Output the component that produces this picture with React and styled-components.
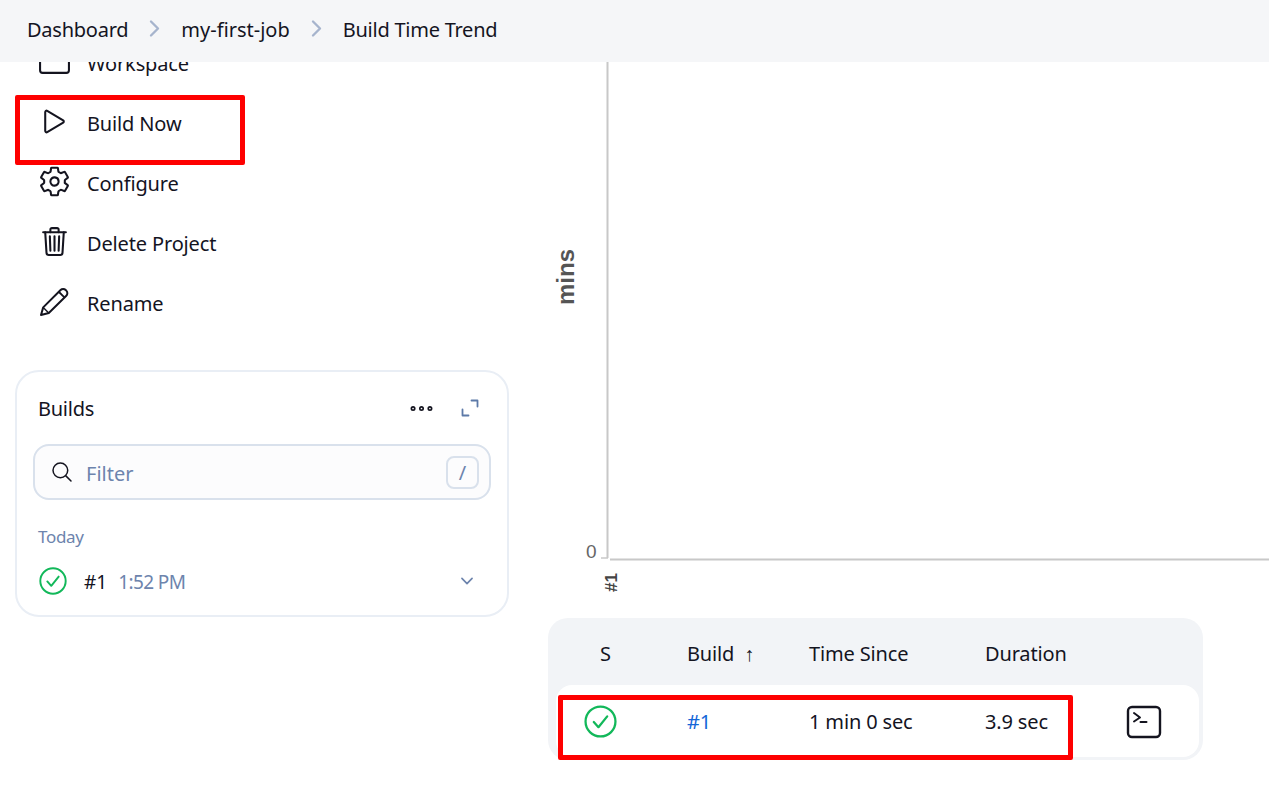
import styled, { createGlobalStyle } from "styled-components";
import {
  IoPlayOutline,
  IoSettingsOutline,
  IoTrashOutline,
  IoFolderOutline,
  IoSearchOutline,
  IoEllipsisHorizontalOutline,
  IoChevronDown,
  IoChevronForward,
} from "react-icons/io5";

const GlobalStyle = createGlobalStyle`
  html, body {
    margin: 0;
    padding: 0;
    background: #fff;
    overflow: hidden;
  }
  body {
    font-family: "Noto Sans", "Open Sans", sans-serif;
    color: #14141f;
  }
`;

const Page = styled.div`
  width: 1269px;
  height: 792px;
  overflow: hidden;
  position: relative;
`;

const Breadcrumbs = styled.nav`
  position: relative;
  z-index: 2;
  height: 62px;
  background: #f5f6f8;
  display: flex;
  align-items: center;
  padding: 0 0 4px 27px;
  box-sizing: border-box;
  font-size: 20px;
`;

const Crumb = styled.span`
  white-space: nowrap;
  letter-spacing: ${(p) => p.$tracking ?? -0.25}px;
`;

const CrumbArrow = styled.span`
  display: flex;
  width: 53px;
  justify-content: center;
  color: #a6b4cd;
  font-size: 25px;
  margin-bottom: 1px;
`;

const Columns = styled.div`
  display: flex;
`;

const Sidebar = styled.aside`
  width: 548px;
  flex: none;
  padding-left: 15px;
  box-sizing: border-box;
`;

const Nav = styled.div`
  margin-top: -28px;
  margin-bottom: 36px;
`;

const NavRow = styled.div`
  position: relative;
  height: 60px;
  box-sizing: border-box;
  padding-bottom: 2px;
  display: flex;
  align-items: center;
  font-size: 20px;
  letter-spacing: -0.15px;
`;

const NavIcon = styled.span`
  width: 72px;
  padding-left: 23px;
  margin-bottom: 3px;
  box-sizing: border-box;
  flex: none;
  display: flex;
  font-size: 33px;
`;

const Highlight = styled.div`
  position: absolute;
  border: 5px solid #fe0000;
  border-radius: 2px;
  box-sizing: border-box;
  left: ${(p) => p.$left}px;
  top: ${(p) => p.$top}px;
  width: ${(p) => p.$width}px;
  height: ${(p) => p.$height}px;
`;

const BuildsCard = styled.section`
  width: 494px;
  height: 247px;
  box-sizing: border-box;
  border: 2px solid #e9eef5;
  border-radius: 24px;
  padding: 0 16px;
`;

const CardHeader = styled.div`
  height: 72px;
  display: flex;
  align-items: center;
  padding: 0 12px 0 5px;
  font-size: 20px;
  letter-spacing: -0.25px;
`;

const CardTitle = styled.span`
  flex: 1;
`;

const HeaderButton = styled.span`
  display: flex;
  margin-left: ${(p) => p.$gap}px;
  font-size: 27px;
`;

const FilterBox = styled.div`
  height: 56px;
  box-sizing: border-box;
  border: 2px solid #d9e1ec;
  border-radius: 16px;
  background: #fcfcfd;
  display: flex;
  align-items: center;
  padding: 0 10px 0 15px;
  gap: 12px;
  color: #6d84ad;
  font-size: 20px;
`;

const FilterIcon = styled.span`
  display: flex;
  color: #14141f;
  font-size: 24px;
`;

const FilterText = styled.span`
  flex: 1;
  padding-top: 3px;
`;

const KeyHint = styled.kbd`
  width: 33px;
  height: 33px;
  box-sizing: border-box;
  border: 2px solid #d9e1ec;
  border-radius: 8px;
  display: flex;
  align-items: center;
  justify-content: center;
  font-family: inherit;
  font-size: 20px;
`;

const DayLabel = styled.div`
  margin: 25px 0 0 5px;
  color: #6d84ad;
  font-size: 17px;
  letter-spacing: -0.3px;
`;

const BuildRow = styled.div`
  display: flex;
  align-items: center;
  margin: 18px 0 0 6px;
  height: 30px;
  font-size: 19px;
`;

const BuildNumber = styled.span`
  margin-left: 17px;
  padding-top: 1px;
`;

const BuildTime = styled.span`
  margin-left: 11px;
  padding-top: 1px;
  flex: 1;
  color: #6d84ad;
  letter-spacing: -0.6px;
`;

const RowChevron = styled.span`
  display: flex;
  color: #6d84ad;
  font-size: 18px;
  margin: 0 15px 1px 0;
`;

const Main = styled.main`
  flex: 1;
  min-width: 0;
`;

const ChartFrame = styled.div`
  height: 556px;
`;

const TableCard = styled.div`
  width: 655px;
  height: 142px;
  box-sizing: border-box;
  background: #f2f4f7;
  border-radius: 20px;
  padding: 0 4px 3px 8px;
  display: flex;
  flex-direction: column;
  font-size: 20px;
  letter-spacing: -0.15px;
`;

const TableRow = styled.div`
  position: relative;
  display: grid;
  grid-template-columns: 131px 122px 176px 1fr 78px;
  align-items: center;
  height: ${(p) => p.$height}px;
  box-sizing: border-box;
  padding-top: ${(p) => (p.$body ? "1px" : "4px")};
  background: ${(p) => (p.$body ? "#fff" : "transparent")};
  border-radius: ${(p) => (p.$body ? "16px" : "0")};
`;

const Cell = styled.span`
  white-space: nowrap;
  padding-left: ${(p) => p.$indent || 0}px;
  display: flex;
  align-items: center;
`;

const BuildLink = styled.a`
  color: #1466d8;
  text-decoration: none;
`;

function StatusIcon({ size, width }) {
  return (
    <svg width={size} height={size} viewBox="0 0 32 32" fill="none">
      <circle cx="16" cy="16" r="14.5" stroke="#12b85a" strokeWidth={width} />
      <path
        d="M9.5 16.5l4.5 5 8.5-10.5"
        stroke="#12b85a"
        strokeWidth={width}
        strokeLinecap="round"
        strokeLinejoin="round"
      />
    </svg>
  );
}

function PencilIcon() {
  return (
    <svg width="33" height="33" viewBox="0 0 33 33" fill="none">
      <path
        d="M3 30l2.2-7.6L22.6 5a3.6 3.6 0 0 1 5.1 0l.6.6a3.6 3.6 0 0 1 0 5.1L10.8 28z"
        stroke="#14141f"
        strokeWidth="2"
        strokeLinejoin="round"
      />
      <path d="M21 7l5.4 5.4" stroke="#14141f" strokeWidth="1.8" />
      <path d="M5.2 22.4l5.6 5.6" stroke="#14141f" strokeWidth="1.4" />
    </svg>
  );
}

function ExpandIcon() {
  return (
    <svg width="18" height="18" viewBox="0 0 18 18" fill="none">
      <path
        d="M10.5 1.5h6v6M1.5 10.5v6h6"
        stroke="#5d7aa8"
        strokeWidth="1.8"
        strokeLinecap="round"
        strokeLinejoin="round"
      />
    </svg>
  );
}

function ConsoleIcon() {
  return (
    <svg width="36" height="34" viewBox="0 0 36 34" fill="none">
      <rect x="2" y="2" width="32" height="30" rx="4" stroke="#14141f" strokeWidth="2.4" />
      <path
        d="M8 8l6 4.5-6 4M14.5 17h6"
        stroke="#14141f"
        strokeWidth="2"
        strokeLinecap="round"
        strokeLinejoin="round"
      />
    </svg>
  );
}

function TrendChart() {
  return (
    <svg width="721" height="556" viewBox="0 0 721 556">
      <line x1="59.5" y1="0" x2="59.5" y2="496" stroke="#c8c8c8" strokeWidth="2" />
      <line x1="53" y1="496" x2="60" y2="496" stroke="#c8c8c8" strokeWidth="1.5" />
      <line x1="62" y1="497.5" x2="721" y2="497.5" stroke="#c8c8c8" strokeWidth="2" />
      <text
        transform="translate(26 243) rotate(-90)"
        fontFamily="Liberation Sans, sans-serif"
        fontSize="24"
        fontWeight="700"
        fill="#555"
      >
        mins
      </text>
      <text x="38" y="496" fontFamily="Liberation Sans, sans-serif" fontSize="19" fill="#666">
        0
      </text>
      <text
        transform="translate(69 530) rotate(-90)"
        fontFamily="Liberation Sans, sans-serif"
        fontSize="17"
        fontWeight="700"
        fill="#444"
      >
        #1
      </text>
    </svg>
  );
}

const navItems = [
  { label: "Workspace", icon: <IoFolderOutline /> },
  { label: "Build Now", icon: <IoPlayOutline />, marked: true },
  { label: "Configure", icon: <IoSettingsOutline /> },
  { label: "Delete Project", icon: <IoTrashOutline /> },
  { label: "Rename", icon: <PencilIcon /> },
];

export default function App() {
  return (
    <Page>
      <GlobalStyle />
      <Breadcrumbs>
        <Crumb>Dashboard</Crumb>
        <CrumbArrow>
          <IoChevronForward />
        </CrumbArrow>
        <Crumb $tracking={0}>my-first-job</Crumb>
        <CrumbArrow>
          <IoChevronForward />
        </CrumbArrow>
        <Crumb>Build Time Trend</Crumb>
      </Breadcrumbs>
      <Columns>
        <Sidebar>
          <Nav>
            {navItems.map((item) => (
              <NavRow key={item.label}>
                <NavIcon>{item.icon}</NavIcon>
                {item.label}
                {item.marked && <Highlight $left={0} $top={1} $width={230} $height={70} />}
              </NavRow>
            ))}
          </Nav>
          <BuildsCard>
            <CardHeader>
              <CardTitle>Builds</CardTitle>
              <HeaderButton $gap={0}>
                <IoEllipsisHorizontalOutline />
              </HeaderButton>
              <HeaderButton $gap={26}>
                <ExpandIcon />
              </HeaderButton>
            </CardHeader>
            <FilterBox>
              <FilterIcon>
                <IoSearchOutline />
              </FilterIcon>
              <FilterText>Filter</FilterText>
              <KeyHint>/</KeyHint>
            </FilterBox>
            <DayLabel>Today</DayLabel>
            <BuildRow>
              <StatusIcon size={28} width={2.2} />
              <BuildNumber>#1</BuildNumber>
              <BuildTime>1:52 PM</BuildTime>
              <RowChevron>
                <IoChevronDown />
              </RowChevron>
            </BuildRow>
          </BuildsCard>
        </Sidebar>
        <Main>
          <ChartFrame>
            <TrendChart />
          </ChartFrame>
          <TableCard>
            <TableRow $height={67}>
              <Cell $indent={44}>S</Cell>
              <Cell>Build&nbsp;&nbsp;↑</Cell>
              <Cell>Time Since</Cell>
              <Cell>Duration</Cell>
              <Cell />
            </TableRow>
            <TableRow $body $height={72}>
              <Cell $indent={28}>
                <StatusIcon size={33} width={2.2} />
              </Cell>
              <Cell>
                <BuildLink>#1</BuildLink>
              </Cell>
              <Cell>1 min 0 sec</Cell>
              <Cell>3.9 sec</Cell>
              <Cell $indent={5}>
                <ConsoleIcon />
              </Cell>
              <Highlight $left={2} $top={10} $width={515} $height={65} />
            </TableRow>
          </TableCard>
        </Main>
      </Columns>
    </Page>
  );
}
